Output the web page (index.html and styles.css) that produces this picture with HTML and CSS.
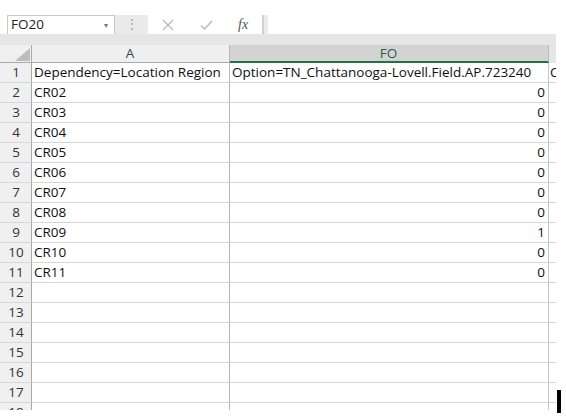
FILE: index.html
```html
<!DOCTYPE html>
<html>
<head>
<meta charset="utf-8">
<link rel="stylesheet" href="styles.css">
</head>
<body>
<div class="app">
  <div class="fbar">
    <div class="namebox"><span class="nb-text">FO20</span><span class="dd">&#9662;</span></div>
    <div class="grip">&#8942;</div>
    <div class="btns">
      <svg class="ico" width="12" height="12" viewBox="0 0 12 12"><path d="M1 1L11 11M11 1L1 11" stroke="#b9b9b9" stroke-width="1.2" fill="none"/></svg>
      <svg class="ico" width="13" height="12" viewBox="0 0 13 12"><path d="M1 6.5L4.5 10L12 2" stroke="#b9b9b9" stroke-width="1.4" fill="none"/></svg>
      <span class="fx">fx</span>
    </div>
    <div class="sep"></div>
    <div class="finput"></div>
  </div>
  <div class="band"></div>
  <div class="sheet">
    <div class="row head">
      <div class="rh corner"><svg width="15" height="13" viewBox="0 0 15 13"><path d="M15 0V13H0Z" fill="#bdbdbd"/></svg></div>
      <div class="c ca hc">A</div>
      <div class="c cfo hc sel">FO</div>
      <div class="c cx hc"></div>
    </div>
    <div class="row"><div class="rh">1</div><div class="c ca">Dependency=Location Region</div><div class="c cfo">Option=TN_Chattanooga-Lovell.Field.AP.723240</div><div class="c cx">C</div></div>
    <div class="row"><div class="rh">2</div><div class="c ca">CR02</div><div class="c cfo num">0</div><div class="c cx"></div></div>
    <div class="row"><div class="rh">3</div><div class="c ca">CR03</div><div class="c cfo num">0</div><div class="c cx"></div></div>
    <div class="row"><div class="rh">4</div><div class="c ca">CR04</div><div class="c cfo num">0</div><div class="c cx"></div></div>
    <div class="row"><div class="rh">5</div><div class="c ca">CR05</div><div class="c cfo num">0</div><div class="c cx"></div></div>
    <div class="row"><div class="rh">6</div><div class="c ca">CR06</div><div class="c cfo num">0</div><div class="c cx"></div></div>
    <div class="row"><div class="rh">7</div><div class="c ca">CR07</div><div class="c cfo num">0</div><div class="c cx"></div></div>
    <div class="row"><div class="rh">8</div><div class="c ca">CR08</div><div class="c cfo num">0</div><div class="c cx"></div></div>
    <div class="row"><div class="rh">9</div><div class="c ca">CR09</div><div class="c cfo num">1</div><div class="c cx"></div></div>
    <div class="row"><div class="rh">10</div><div class="c ca">CR10</div><div class="c cfo num">0</div><div class="c cx"></div></div>
    <div class="row"><div class="rh">11</div><div class="c ca">CR11</div><div class="c cfo num">0</div><div class="c cx"></div></div>
    <div class="row"><div class="rh">12</div><div class="c ca"></div><div class="c cfo"></div><div class="c cx"></div></div>
    <div class="row"><div class="rh">13</div><div class="c ca"></div><div class="c cfo"></div><div class="c cx"></div></div>
    <div class="row"><div class="rh">14</div><div class="c ca"></div><div class="c cfo"></div><div class="c cx"></div></div>
    <div class="row"><div class="rh">15</div><div class="c ca"></div><div class="c cfo"></div><div class="c cx"></div></div>
    <div class="row"><div class="rh">16</div><div class="c ca"></div><div class="c cfo"></div><div class="c cx"></div></div>
    <div class="row"><div class="rh">17</div><div class="c ca"></div><div class="c cfo"></div><div class="c cx"></div></div>
    <div class="row"><div class="rh">18</div><div class="c ca"></div><div class="c cfo"></div><div class="c cx"></div></div>
  </div>
  <div class="cursor"></div>
</div>
</body>
</html>
```

FILE: styles.css
```css
* { box-sizing: border-box; }
html, body { margin: 0; padding: 0; background: #fff; }
body {
  font-family: "Open Sans", "Liberation Sans", sans-serif;
  font-size: 13.5px;
  color: #111;
}
.app {
  position: relative;
  width: 566px;
  height: 420px;
  padding-top: 15px;
}
.fbar {
  display: flex;
  height: 19px;
  width: 556px;
}
.namebox {
  margin-left: 7px;
  width: 108px;
  border: 1px solid #c9c9c9;
  border-bottom: none;
  background: #fff;
  display: flex;
  align-items: center;
  justify-content: space-between;
  padding: 0 6px 0 3px;
  color: #222;
  line-height: 1;
}
.dd { font-size: 8px; color: #777; }
.grip {
  width: 33px;
  background: #eaeaea;
  color: #9a9a9a;
  text-align: center;
  font-size: 12px;
  line-height: 18px;
}
.btns {
  width: 114px;
  background: #fff;
  display: flex;
  align-items: center;
  padding-left: 14px;
  gap: 26px;
}
.fx {
  font-family: "Liberation Serif", serif;
  font-style: italic;
  font-size: 14px;
  color: #555;
  margin-left: -1px;
}
.sep {
  width: 6px;
  background: #eaeaea;
  border-left: 2px solid #d0d0d0;
}
.finput { flex: 1; background: #fff; }
.band {
  height: 11px;
  width: 556px;
  background: #e6e6e6;
}
.sheet {
  width: 556px;
  height: 365px;
  overflow: hidden;
  background: #fff;
}
.row {
  display: flex;
  height: 20px;
}
.row.head { height: 18px; }
.rh {
  width: 32px;
  flex: none;
  background: #f0f0f0;
  border-right: 1px solid #a9a9a9;
  border-bottom: 1px solid #d7d7d7;
  color: #333;
  text-align: center;
  line-height: 19px;
  padding-left: 1px;
}
.corner {
  display: flex;
  align-items: flex-end;
  justify-content: flex-end;
  padding: 0 1px 1px 0;
  border-bottom: 1px solid #a9a9a9;
}
.c {
  flex: none;
  border-bottom: 1px solid #d7d7d7;
  line-height: 19px;
  white-space: nowrap;
  overflow: hidden;
  padding: 0 3px 0 2px;
}
.ca { width: 198px; border-right: 1px solid #b6b6b6; }
.cfo { width: 319px; border-right: 1px solid #c6c6c6; }
.cx { width: 7px; padding: 0 1px; }
.num { text-align: right; }
.hc {
  background: #efefef;
  color: #444;
  text-align: center;
  line-height: 17px;
  border-bottom: 1px solid #a9a9a9;
}
.hc.cx { background: #e6e6e6; border-bottom: none; }
.hc.sel {
  background: #d3d3d3;
  color: #2f5e45;
  border-bottom: 2px solid #217346;
  border-right: 1px solid #bdbdbd;
}
.cursor {
  position: absolute;
  left: 557px;
  top: 390px;
  width: 4px;
  height: 23px;
  background: #000;
}
```
